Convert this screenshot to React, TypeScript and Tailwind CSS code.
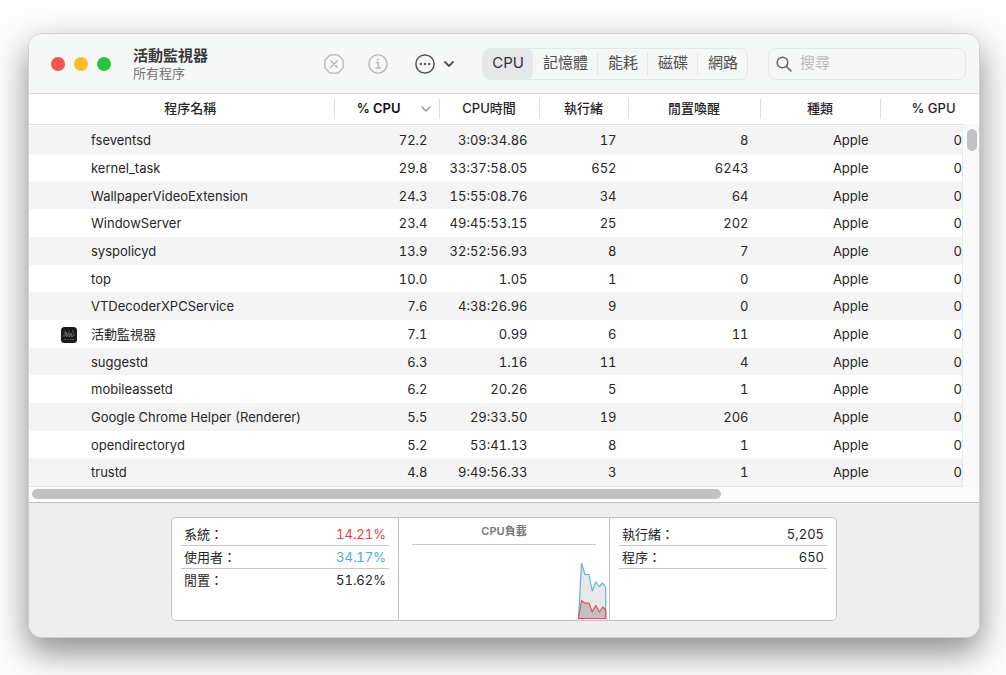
import { useState } from 'react'

type Processo = {
  name: string
  cpu: string
  time: string
  threads: string
  wakes: string
  icon?: boolean
}

const processes: Processo[] = [
  { name: 'fseventsd', cpu: '72.2', time: '3:09:34.86', threads: '17', wakes: '8' },
  { name: 'kernel_task', cpu: '29.8', time: '33:37:58.05', threads: '652', wakes: '6243' },
  { name: 'WallpaperVideoExtension', cpu: '24.3', time: '15:55:08.76', threads: '34', wakes: '64' },
  { name: 'WindowServer', cpu: '23.4', time: '49:45:53.15', threads: '25', wakes: '202' },
  { name: 'syspolicyd', cpu: '13.9', time: '32:52:56.93', threads: '8', wakes: '7' },
  { name: 'top', cpu: '10.0', time: '1.05', threads: '1', wakes: '0' },
  { name: 'VTDecoderXPCService', cpu: '7.6', time: '4:38:26.96', threads: '9', wakes: '0' },
  { name: '活動監視器', cpu: '7.1', time: '0.99', threads: '6', wakes: '11', icon: true },
  { name: 'suggestd', cpu: '6.3', time: '1.16', threads: '11', wakes: '4' },
  { name: 'mobileassetd', cpu: '6.2', time: '20.26', threads: '5', wakes: '1' },
  { name: 'Google Chrome Helper (Renderer)', cpu: '5.5', time: '29:33.50', threads: '19', wakes: '206' },
  { name: 'opendirectoryd', cpu: '5.2', time: '53:41.13', threads: '8', wakes: '1' },
  { name: 'trustd', cpu: '4.8', time: '9:49:56.33', threads: '3', wakes: '1' },
]

const tabs = ['CPU', '記憶體', '能耗', '磁碟', '網路']

/* ================== TOOLBAR ================== */
function Toolbar() {
  const [tab, setTab] = useState('CPU')
  const [query, setQuery] = useState('')

  return (
    <header className="flex h-[60px] items-center border-b border-[#dcdddd] bg-[#f6f7f7] pl-[22px] pr-[13px]">
      <div className="flex gap-[9px]">
        <button aria-label="關閉" className="size-[14px] rounded-full bg-[#f0544d]" />
        <button aria-label="縮到最小" className="size-[14px] rounded-full bg-[#fbbb2e]" />
        <button aria-label="縮放" className="size-[14px] rounded-full bg-[#2ac53f]" />
      </div>

      <div className="ml-[22px]">
        <h1 className="text-[15px] font-bold leading-[18px] text-[#3a3a3a]">活動監視器</h1>
        <p className="text-[13px] leading-4 text-[#757575]">所有程序</p>
      </div>

      <div className="ml-auto flex items-center">
        <button aria-label="停止" className="text-[#b7b8b8]">
          <svg className="size-5" viewBox="0 0 20 20" fill="none" stroke="currentColor" strokeWidth="1.4" strokeLinecap="round" strokeLinejoin="round">
            <path d="M6.6 .9h6.8q.5 0 .9.4l4.4 4.4q.4.4.4.9v6.8q0 .5-.4.9l-4.4 4.4q-.4.4-.9.4H6.6q-.5 0-.9-.4L1.3 14.300q-.4-.4-.4-.9V6.600q0-.5.4-.9l4.400-4.400q.4-.4.9-.4z" />
            <path d="M6.700 6.700l6.600 6.600M13.300 6.700l-6.600 6.600" />
          </svg>
        </button>
        <button aria-label="資訊" className="ml-6 text-[#b7b8b8]">
          <svg className="size-5" viewBox="0 0 20 20" fill="none" stroke="currentColor" strokeWidth="1.4" strokeLinecap="round" strokeLinejoin="round">
            <circle cx="10" cy="10" r="9.100" />
            <path d="M8.200 8.500h2v5.500M8 14h4.500" />
            <circle cx="9.900" cy="5.600" r=".7" fill="currentColor" strokeWidth=".8" />
          </svg>
        </button>
        <button aria-label="更多" className="ml-[27px] flex items-center gap-[9px] text-[#555]">
          <svg className="size-5" viewBox="0 0 20 20" fill="none" stroke="currentColor" strokeWidth="1.5">
            <circle cx="10" cy="10" r="9.100" />
            <g fill="currentColor" stroke="none">
              <circle cx="5.800" cy="10" r="1.200" />
              <circle cx="10" cy="10" r="1.200" />
              <circle cx="14.200" cy="10" r="1.200" />
            </g>
          </svg>
          <svg className="h-[6px] w-[10px]" viewBox="0 0 10 6" fill="none" stroke="currentColor" strokeWidth="1.8" strokeLinecap="round" strokeLinejoin="round">
            <path d="M1 1l4 4 4-4" />
          </svg>
        </button>

        <nav className="ml-7 flex h-8 items-center overflow-hidden rounded-lg border border-[#e6e7e7]">
          {tabs.map((t, i) => (
            <button
              key={t}
              onClick={() => setTab(t)}
              className={`flex items-center text-[15px] ${
                tab === t
                  ? 'h-full rounded-l-lg rounded-r-md bg-[#e6e7e8] px-[9px] text-[#333]'
                  : `h-6 pl-[10px] pr-[9px] text-[#4f4f4f] ${i > 1 ? 'border-l border-[#e6e7e7]' : ''}`
              }`}
            >
              {t}
            </button>
          ))}
        </nav>

        <label className="ml-5 flex h-8 w-[198px] items-center gap-2 rounded-lg border border-[#e6e7e7] px-[7px]">
          <svg className="size-4 shrink-0 text-[#666]" viewBox="0 0 16 16" fill="none" stroke="currentColor" strokeWidth="1.5" strokeLinecap="round">
            <circle cx="6.500" cy="6.500" r="5.300" />
            <path d="M10.500 10.500l4.500 4.500" />
          </svg>
          <input
            type="text"
            aria-label="搜尋"
            placeholder="搜尋"
            value={query}
            onChange={(e) => setQuery(e.target.value)}
            className="w-full min-w-0 bg-transparent text-[15px] outline-none placeholder:text-[#b9baba]"
          />
        </label>
      </div>
    </header>
  )
}

/* ================== PROCESS TABLE ================== */
function HeadLabel({ children, last }: { children: React.ReactNode; last?: boolean }) {
  return (
    <div className={`flex h-5 items-center justify-center ${last ? 'pl-6' : 'border-r border-[#dedede]'}`}>
      {children}
    </div>
  )
}

function AppIcon() {
  return (
    <svg className="ml-8 mr-[14px] size-4 shrink-0" viewBox="0 0 16 16" fill="none">
      <rect width="16" height="16" rx="3.500" fill="#1b1b1b" />
      <path d="M4 3v4M8 3.500v3M12 3v4" stroke="#6e6e6e" strokeWidth=".7" />
      <path d="M2 9h2l1-4 1 5 1.500-4 1 4 1.500-4 1 4 1-2h2" stroke="#858585" strokeWidth=".7" />
      <path d="M3 12.500h2M6.500 12.500h1M9 12.500h4" stroke="#666" strokeWidth=".8" />
    </svg>
  )
}

function ProcessTable() {
  return (
    <div className="flex bg-white">
      <table className="w-full min-w-0 flex-1 table-fixed border-collapse text-[13px] text-[#262626]">
        <thead>
          <tr className="h-[30px] border-b border-[#dfdfdf]">
            <th className="p-0 font-medium">
              <div className="flex h-5 items-center justify-center border-r border-[#dedede] pl-[18px]">程序名稱</div>
            </th>
            <th className="w-[105px] p-0 font-semibold text-[#111]">
              <div className="flex h-5 items-center justify-end border-r border-[#dedede] pr-2">
                % CPU
                <svg className="ml-5 h-[6px] w-[10px]" viewBox="0 0 10 6" fill="none" stroke="#8a8a8a" strokeWidth="1.200" strokeLinecap="round" strokeLinejoin="round">
                  <path d="M1 1l4 4 4-4" />
                </svg>
              </div>
            </th>
            <th className="w-[100px] p-0 font-medium"><HeadLabel>CPU時間</HeadLabel></th>
            <th className="w-[89px] p-0 font-medium"><HeadLabel>執行緒</HeadLabel></th>
            <th className="w-[132px] p-0 font-medium"><HeadLabel>閒置喚醒</HeadLabel></th>
            <th className="w-[120px] p-0 font-medium"><HeadLabel>種類</HeadLabel></th>
            <th className="w-[82px] p-0 font-medium"><HeadLabel last>% GPU</HeadLabel></th>
          </tr>
          <tr className="h-[2px]"><td colSpan={7} className="p-0" /></tr>
        </thead>
        <tbody className="tabular-nums">
          {processes.map((p) => (
            <tr
              key={p.name}
              className="h-7 odd:bg-[#f4f4f4] last:border-b last:border-[#e4e4e4] nth-[3n]:h-[27px] [&>td]:pt-[2px]"
            >
              <td>
                {p.icon ? (
                  <div className="flex items-center">
                    <AppIcon />
                    {p.name}
                  </div>
                ) : (
                  <div className="truncate pl-[62px]">{p.name}</div>
                )}
              </td>
              <td className="pr-3 text-right">{p.cpu}</td>
              <td className="pr-3 text-right">{p.time}</td>
              <td className="pr-3 text-right">{p.threads}</td>
              <td className="pr-3 text-right">{p.wakes}</td>
              <td className="pr-3 text-right">Apple</td>
              <td className="border-r border-[#e8eaea] text-right">0</td>
            </tr>
          ))}
        </tbody>
      </table>
      <div className="w-4 shrink-0 pt-[30px]">
        <div className="h-full bg-[#fafafa] pl-1 pr-[2px] pt-[5px]">
          <div className="h-[22px] rounded-full bg-[#c1c1c1]" />
        </div>
      </div>
    </div>
  )
}

/* ================== FOOTER ================== */
function StatRow({ label, value, color = 'text-[#262626]', line = true }: { label: string; value: string; color?: string; line?: boolean }) {
  return (
    <div className={`flex h-[23px] items-center justify-between px-[3px] pt-[2px] text-[13px] tabular-nums ${line ? 'border-b border-[#c6c6c6]' : ''}`}>
      <dt className="text-[#262626]">{label}</dt>
      <dd className={color}>{value}</dd>
    </div>
  )
}

function CpuChart() {
  return (
    <svg className="ml-auto mr-[2px] mt-auto h-[60px] w-[30px]" viewBox="0 0 30 60" fill="none" strokeWidth="1.200" strokeLinejoin="round">
      <path d="M1.500 58.500L4.500 3.500l3.500 11h4l3.200 16.500 3.600-9 3.600 4.500 3.300-3.500 3 4.500v31z" fill="#e6e8ea" stroke="#62b5d4" />
      <path d="M1.500 58.500L4.500 40.500l3.500 2.700h4l3.200 8.800 3.600-6.500 3.600 6.500 3.300-5 3 3v8.500z" fill="#c3c0c1" stroke="#db554f" />
    </svg>
  )
}

function Footer() {
  return (
    <footer className="border-t border-[#c3c3c3] bg-[#eeeeee] px-6 pb-4 pt-[14px]">
      <div className="mx-auto grid h-[104px] w-full max-w-[666px] grid-cols-[227fr_211fr_226fr] rounded-[5px] border border-[#c4c4c4] bg-white">
        <dl className="border-r border-[#c4c4c4] px-[9px] pt-[5px]">
          <StatRow label="系統：" value="14.21%" color="text-[#d9483f]" />
          <StatRow label="使用者：" value="34.17%" color="text-[#4aaed0]" />
          <StatRow label="閒置：" value="51.62%" line={false} />
        </dl>
        <div className="flex flex-col border-r border-[#c4c4c4]">
          <h2 className="mx-[13px] h-[27px] border-b border-[#c6c6c6] text-center text-[11px] font-semibold leading-[26px] text-[#777]">
            CPU負載
          </h2>
          <CpuChart />
        </div>
        <dl className="px-[9px] pt-[5px]">
          <StatRow label="執行緒：" value="5,205" />
          <StatRow label="程序：" value="650" />
        </dl>
      </div>
    </footer>
  )
}

export default function App() {
  return (
    <div className="min-h-screen overflow-hidden bg-[#fdfdfd] pb-[37px] pl-7 pr-[26px] pt-[33px] font-['Inter','Noto_Sans_CJK_TC',sans-serif]">
      <main className="overflow-hidden rounded-[14px] border border-[#cfcfcf] bg-white shadow-[0_14px_34px_rgba(0,0,0,0.46)]">
        <Toolbar />
        <ProcessTable />
        <div className="bg-[#fcfcfc] px-[3px] pb-[3px] pt-[2px]">
          <div className="h-[10px] w-[73%] rounded-full bg-[#c1c1c1]" />
        </div>
        <Footer />
      </main>
    </div>
  )
}
